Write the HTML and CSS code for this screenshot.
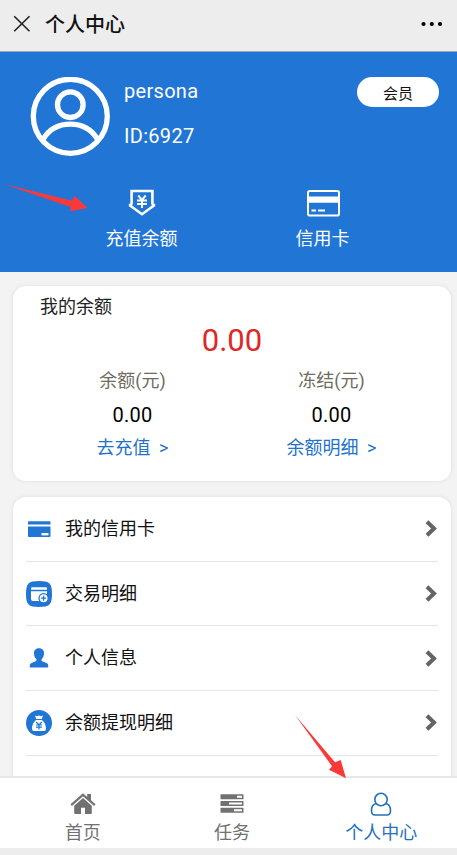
FILE: index.html
```html
<!DOCTYPE html>
<html lang="zh-CN">
<head>
<meta charset="utf-8">
<title>个人中心</title>
<link rel="stylesheet" href="styles.css">
</head>
<body>
<div class="app">
  <header class="titlebar">
    <svg class="close" width="18" height="18" viewBox="0 0 18 18"><path d="M1.2 1.2 16.500 16.200M16.500 1.200 1.200 16.200"/></svg>
    <h1>个人中心</h1>
    <svg class="more" width="22" height="6" viewBox="0 0 22 6"><circle cx="2.500" cy="3" r="2.100"/><circle cx="10.800" cy="3" r="2.100"/><circle cx="19" cy="3" r="2.100"/></svg>
  </header>

  <section class="profile">
    <div class="user">
      <svg class="avatar" width="80" height="80" viewBox="0 0 80 80"><circle cx="40.300" cy="39.300" r="37"/><circle cx="40.300" cy="27.700" r="12.800"/><path d="M13.300 62C20 51 29 47.200 40.300 47.200S60.500 51 67.300 62"/></svg>
      <div class="identity">
        <div>persona</div>
        <div>ID:6927</div>
      </div>
      <div class="badge">会员</div>
    </div>
    <div class="actions">
      <div class="action">
        <svg width="28" height="28" viewBox="0 0 28 28"><path class="line" d="M3.600 15.500V2h20.800v13.500M.8 16h3.500M23.700 16h3.500M2 16.500 14 25.200l12-8.700"/><path class="yen" d="m10.300 6.500 3.700 4.500 3.700-4.500M9 11.500h10M9 15h10M14 11v8"/></svg>
        <span>充值余额</span>
      </div>
      <div class="action">
        <svg width="34" height="28" viewBox="0 0 34 28"><rect class="card-line" x="2" y="2" width="31" height="24.500" rx="1.800"/><path class="solid" d="M1.500 7.500h32v6.200h-32zM5.500 20.500h4.500v2H5.500zM12 20.500h7v2h-7z"/></svg>
        <span>信用卡</span>
      </div>
    </div>
  </section>

  <main class="content">
    <section class="card balance">
      <h2>我的余额</h2>
      <div class="total">0.00</div>
      <div class="columns">
        <div class="column"><span class="label">余额(元)</span><span class="amount">0.00</span><a class="link">去充值 <i>&gt;</i></a></div>
        <div class="column"><span class="label">冻结(元)</span><span class="amount">0.00</span><a class="link">余额明细 <i>&gt;</i></a></div>
      </div>
    </section>

    <section class="card menu">
      <div class="row">
        <svg class="icon" width="26" height="26" viewBox="0 0 26 26"><path d="M3 5.200h20.500q1 0 1 1V8.500H2V6.200q0-1 1-1zM2 10.500h22.500v9.500q0 1-1 1H3q-1 0-1-1z"/><path class="white" d="M15.500 17h7v2.400h-7z"/></svg>
        <span>我的信用卡</span>
        <svg class="chevron" width="13" height="17" viewBox="0 0 13 17"><path d="m2 1.800 7 6.700-7 6.700"/></svg>
      </div>
      <div class="row">
        <svg class="icon" width="26" height="26" viewBox="0 0 26 26"><path d="M13 0C23.500 0 26 2.500 26 13S23.500 26 13 26 0 23.500 0 13 2.500 0 13 0z"/><path class="white" d="M6 6.300h14q1 0 1 1v1.500H5V7.300q0-1 1-1zM5 10.300h16V18q0 2-2 2H7q-2 0-2-2z"/><circle class="coin" cx="17.600" cy="17.200" r="4.600"/><path class="coin" d="M17.600 14.700v5M15.100 17.200h5"/></svg>
        <span>交易明细</span>
        <svg class="chevron" width="13" height="17" viewBox="0 0 13 17"><path d="m2 1.800 7 6.700-7 6.700"/></svg>
      </div>
      <div class="row">
        <svg class="icon" width="26" height="26" viewBox="0 0 26 26"><path d="M13 3.300c3.600 0 5.200 2.300 5 5.500-.2 2.800-1.300 4.400-2.400 5.500-.4 1.600.4 2.200 2.400 2.800 3 .9 4.300 1.600 4.300 4.300q0 1-1 1H4.700q-1 0-1-1c0-2.700 1.300-3.400 4.300-4.300 2-.6 2.800-1.200 2.400-2.800C9.300 13.200 8.200 11.600 8 8.800c-.2-3.200 1.400-5.500 5-5.500z"/></svg>
        <span>个人信息</span>
        <svg class="chevron" width="13" height="17" viewBox="0 0 13 17"><path d="m2 1.800 7 6.700-7 6.700"/></svg>
      </div>
      <div class="row">
        <svg class="icon" width="26" height="26" viewBox="0 0 26 26"><circle cx="13" cy="13" r="13"/><path class="white" d="m9 5.500 2 .7 2-.7 2 .7 2-.7-1.200 3.500h-5.600zM10 10h6c2.500 2 4 5.200 4 8.500q0 2.500-2 2.500H8q-2 0-2-2.500C6 15.200 7.500 12 10 10z"/><path class="bag-yen" d="m10.200 12 2.800 3 2.800-3M10 15h6M10 17.200h6M13 15v4.500"/></svg>
        <span>余额提现明细</span>
        <svg class="chevron" width="13" height="17" viewBox="0 0 13 17"><path d="m2 1.800 7 6.700-7 6.700"/></svg>
      </div>
    </section>
  </main>

  <nav class="tabs">
    <div class="tab">
      <svg width="26" height="24" viewBox="0 0 26 24"><path class="fill" d="M13 1.300 17.200 5V2H21v6.300l4.500 4-1.400 1.700L13 4.200 1.900 14 .5 12.300zM13 6l8.800 7.800V21q0 1-1 1H15v-6.300h-4V22H5.200q-1 0-1-1v-7.200z"/></svg>
      <span>首页</span>
    </div>
    <div class="tab">
      <svg width="26" height="24" viewBox="0 0 26 24"><path class="fill" fill-rule="evenodd" d="M2 2.300h22q.5 0 .5.500v4q0 .5-.5.500H2q-.5 0-.5-.5v-4q0-.5.500-.5zM18 3.800v2h5v-2zM2 9h22q.5 0 .5.500v4q0 .5-.5.500H2q-.5 0-.5-.5v-4Q1.500 9 2 9zM10 10.500v2h13v-2zM2 15.700h22q.5 0 .5.500v4q0 .5-.5.500H2q-.5 0-.5-.5v-4q0-.5.500-.5zM15 17.200v2h8v-2z"/></svg>
      <span>任务</span>
    </div>
    <div class="tab active">
      <svg width="26" height="24" viewBox="0 0 26 24"><circle cx="13" cy="7.500" r="6.200"/><path d="M8.200 11.500C5 12.200 3.500 15 3.500 18.700c0 2.600 1.500 4.300 3.700 4.300h11.600c2.200 0 3.700-1.700 3.700-4.300 0-3.700-1.500-6.500-4.700-7.200"/></svg>
      <span>个人中心</span>
    </div>
  </nav>
  <div class="bottom"></div>

  <svg class="pointer pointer-recharge" width="86" height="28" viewBox="0 0 86 28"><path d="M.5 0 69 16.700l2.500-4.900L84.500 24 67 27.300l.8-4.300z"/></svg>
  <svg class="pointer pointer-center" width="52" height="64" viewBox="0 0 52 64"><path d="m0 0 40 47.200 5.700-2.200L51 63.300 34 54.800l3-3.600z"/></svg>
</div>
</body>
</html>
```
FILE: styles.css
```css
* { box-sizing: border-box; }
body {
  margin: 0;
  font-family: Roboto, "Noto Sans CJK SC", sans-serif;
  font-size: 18px;
  color: #111;
  background: #f3f3f3;
}
svg { display: block; flex: none; }
h1, h2 { margin: 0; }
.app {
  position: relative;
  display: flex;
  flex-direction: column;
  width: 457px;
  height: 855px;
  overflow: hidden;
}
.titlebar {
  display: flex;
  align-items: center;
  height: 52px;
  padding: 0 14px 4px 13px;
  background: #ededed;
  border-bottom: 1px solid #9ba9b9;
}
.titlebar h1 {
  flex: 1;
  margin-left: 14px;
  padding-top: 2px;
  font-size: 20px;
  font-weight: 500;
  line-height: 28px;
}
.close { stroke: #222; stroke-width: 1.6; fill: none; }
.more { fill: #000; }
.profile {
  flex: none;
  height: 220px;
  padding-top: 25px;
  color: #fff;
  background: #2176d5;
}
.user {
  display: flex;
  align-items: flex-start;
  height: 106px;
  padding: 0 18px 0 30px;
}
.avatar { fill: none; stroke: #fff; stroke-width: 5.3; }
.identity {
  flex: 1;
  margin-left: 14px;
  font-size: 20px;
  letter-spacing: .3px;
}
.identity div { height: 45px; line-height: 29px; }
.badge {
  width: 82px;
  height: 30px;
  border-radius: 15px;
  color: #111;
  background: #fff;
  font-size: 15px;
  line-height: 34px;
  text-align: center;
}
.actions { display: flex; padding: 6px 44px 0 51px; }
.action {
  flex: 1;
  display: flex;
  flex-direction: column;
  align-items: center;
}
.action span { margin-top: 8px; line-height: 28px; }
.line, .yen, .card-line { fill: none; stroke: #fff; }
.line { stroke-width: 2.6; }
.yen { stroke-width: 2; }
.card-line { stroke-width: 2; }
.solid { fill: #fff; }
.content {
  display: flex;
  flex-direction: column;
  gap: 16px;
  height: 504px;
  padding: 14px 6px 0 13px;
  overflow: hidden;
}
.card {
  flex: none;
  background: #fff;
  border-radius: 13px;
  box-shadow: 0 0 4px rgba(0, 0, 0, .09);
}
.balance { height: 195px; padding: 7px 20px 0; }
.balance h2 {
  padding-left: 7px;
  font-size: 18px;
  font-weight: 400;
  line-height: 28px;
  color: #222;
}
.total {
  height: 46px;
  font-size: 31px;
  line-height: 40px;
  text-align: center;
  color: #e02727;
}
.columns { display: flex; }
.column {
  flex: 1;
  display: flex;
  flex-direction: column;
  align-items: center;
}
.label { height: 32px; line-height: 28px; color: #6f6d60; }
.amount {
  height: 35px;
  font-size: 20px;
  letter-spacing: .3px;
  line-height: 32px;
  color: #000;
}
.link { line-height: 28px; color: #2272c9; }
.link i { margin-left: 4px; font-style: normal; }
.menu { height: 300px; padding: 0 13px; }
.row {
  display: flex;
  align-items: center;
  height: 64.7px;
  border-bottom: 1px solid #e6e6e6;
}
.row span { flex: 1; margin-left: 13px; line-height: 28px; }
.icon { fill: #2176d5; }
.white { fill: #fff; }
.coin { fill: #fff; stroke: #2176d5; stroke-width: 1.3; }
.bag-yen { fill: none; stroke: #2176d5; stroke-width: 1.2; }
.chevron { fill: none; stroke: #646464; stroke-width: 4; }
.tabs {
  display: flex;
  flex: none;
  height: 72px;
  padding: 14px 1px 0 8px;
  background: #fff;
  border-top: 2px solid #e8e8e8;
}
.tab {
  flex: 1;
  display: flex;
  flex-direction: column;
  align-items: center;
  color: #717171;
}
.tab span { margin-top: 3px; line-height: 28px; }
.tab .fill { fill: #717171; }
.tab.active { color: #2570b9; }
.active svg { fill: none; stroke: #2570b9; stroke-width: 1.6; }
.bottom { height: 7px; background: #ededed; }
.pointer { position: absolute; fill: #fd3838; }
.pointer-recharge { left: 3px; top: 184px; }
.pointer-center { left: 295px; top: 715px; }
```
